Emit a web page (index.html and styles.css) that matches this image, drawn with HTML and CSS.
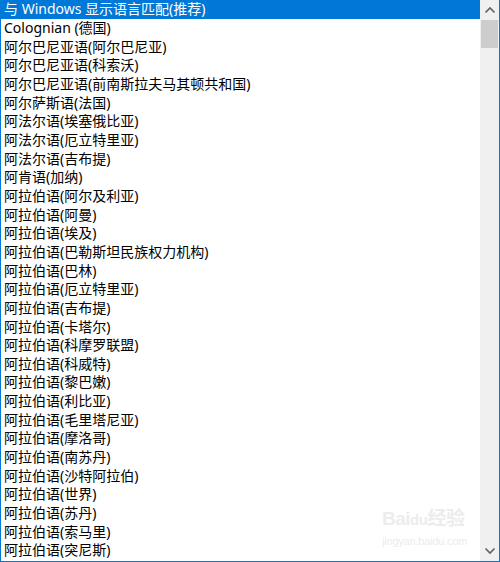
FILE: index.html
```html
<!DOCTYPE html>
<html lang="zh-CN">
<head>
<meta charset="utf-8">
<link rel="stylesheet" href="styles.css">
</head>
<body>
<div class="listbox">
  <ul class="items">
    <li class="item selected">与 Windows 显示语言匹配(推荐)</li>
    <li class="item">Colognian (德国)</li>
    <li class="item">阿尔巴尼亚语(阿尔巴尼亚)</li>
    <li class="item">阿尔巴尼亚语(科索沃)</li>
    <li class="item">阿尔巴尼亚语(前南斯拉夫马其顿共和国)</li>
    <li class="item">阿尔萨斯语(法国)</li>
    <li class="item">阿法尔语(埃塞俄比亚)</li>
    <li class="item">阿法尔语(厄立特里亚)</li>
    <li class="item">阿法尔语(吉布提)</li>
    <li class="item">阿肯语(加纳)</li>
    <li class="item">阿拉伯语(阿尔及利亚)</li>
    <li class="item">阿拉伯语(阿曼)</li>
    <li class="item">阿拉伯语(埃及)</li>
    <li class="item">阿拉伯语(巴勒斯坦民族权力机构)</li>
    <li class="item">阿拉伯语(巴林)</li>
    <li class="item">阿拉伯语(厄立特里亚)</li>
    <li class="item">阿拉伯语(吉布提)</li>
    <li class="item">阿拉伯语(卡塔尔)</li>
    <li class="item">阿拉伯语(科摩罗联盟)</li>
    <li class="item">阿拉伯语(科威特)</li>
    <li class="item">阿拉伯语(黎巴嫩)</li>
    <li class="item">阿拉伯语(利比亚)</li>
    <li class="item">阿拉伯语(毛里塔尼亚)</li>
    <li class="item">阿拉伯语(摩洛哥)</li>
    <li class="item">阿拉伯语(南苏丹)</li>
    <li class="item">阿拉伯语(沙特阿拉伯)</li>
    <li class="item">阿拉伯语(世界)</li>
    <li class="item">阿拉伯语(苏丹)</li>
    <li class="item">阿拉伯语(索马里)</li>
    <li class="item">阿拉伯语(突尼斯)</li>
  </ul>
  <div class="scrollbar">
    <div class="arrow">
      <svg width="12" height="8" viewBox="0 0 12 8"><path d="M1.5 6.5 L6 2 L10.5 6.5" fill="none" stroke="#606060" stroke-width="1.6"/></svg>
    </div>
    <div class="thumb"></div>
    <div class="track"></div>
    <div class="arrow">
      <svg width="12" height="8" viewBox="0 0 12 8"><path d="M1.5 1.5 L6 6 L10.5 1.5" fill="none" stroke="#606060" stroke-width="1.6"/></svg>
    </div>
  </div>
  <div class="watermark">
    <div class="wm-logo">Bai<span class="wm-du">du</span>经验</div>
    <div class="wm-url">jingyan.baidu.com</div>
  </div>
</div>
</body>
</html>
```
FILE: styles.css
```css
html, body {
  margin: 0;
  padding: 0;
  background: #ffffff;
}

.listbox {
  position: relative;
  box-sizing: border-box;
  width: 500px;
  height: 562px;
  border: 1px solid #0078d7;
  border-top: 0;
  display: flex;
  overflow: hidden;
  background: #ffffff;
}

.items {
  list-style: none;
  margin: 0;
  padding: 0;
  flex: 1;
  overflow: hidden;
}

.item {
  height: 18.66px;
  line-height: 18.66px;
  padding-left: 3px;
  font-family: "Noto Sans", "Noto Sans CJK SC", sans-serif;
  font-size: 14px;
  color: #000000;
  white-space: nowrap;
}

.item.selected {
  background: #0078d7;
  color: #ffffff;
  height: 19px;
}

.scrollbar {
  width: 19px;
  flex: none;
  background: #f0f0f0;
  display: flex;
  flex-direction: column;
}

.arrow {
  height: 20px;
  display: flex;
  align-items: center;
  justify-content: center;
  flex: none;
}

.thumb {
  height: 28px;
  margin: 0 1px;
  background: #cdcdcd;
  flex: none;
}

.track {
  flex: 1;
}

.watermark {
  position: absolute;
  left: 381px;
  top: 509px;
  color: #ececec;
  font-family: "Liberation Sans", "Noto Sans CJK SC", sans-serif;
  line-height: 1;
}

.wm-logo {
  font-size: 19px;
  font-weight: bold;
  letter-spacing: -0.5px;
}

.wm-du {
  font-size: 15px;
}

.wm-url {
  margin-top: 8px;
  font-size: 11px;
  letter-spacing: -0.2px;
}
```
